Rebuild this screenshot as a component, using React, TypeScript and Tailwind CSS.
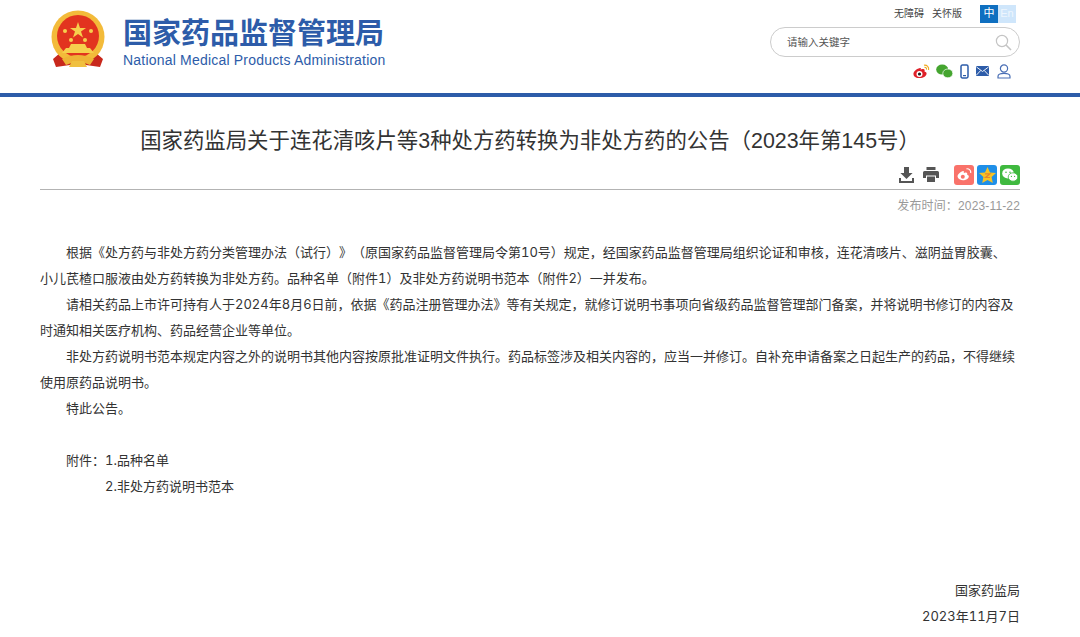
const cjk = "font-['Liberation_Sans','Noto_Sans_CJK_SC',sans-serif]";

function Emblem() {
  return (
    <svg width="56" height="60" viewBox="0 0 56 60">
      <path d="M10 44 L3 50 L6 58 L20 56 L36 56 L50 58 L53 50 L46 44 Z" fill="#c8281c" />
      <circle cx="28" cy="28" r="26.5" fill="#f3bb3a" />
      <circle cx="28" cy="27" r="21" fill="#e2341f" />
      <path d="M28 13 l2 6 h6 l-5 3.6 2 6 -5 -3.7 -5 3.7 2 -6 -5 -3.6 h6z" fill="#f6d04d" />
      <circle cx="15" cy="22" r="2" fill="#f6d04d" />
      <circle cx="41" cy="22" r="2" fill="#f6d04d" />
      <circle cx="21" cy="31" r="2" fill="#f6d04d" />
      <circle cx="35" cy="31" r="2" fill="#f6d04d" />
      <path d="M12 44 L16 39 H19 L21 35 H35 L37 39 H40 L44 44 Z" fill="#f6d04d" />
      <path d="M12 50 Q28 42 44 50 L40 56 Q28 50 16 56 Z" fill="#eeb336" />
      <path d="M22 52 h12 l3 6 h-18z" fill="#f0c040" />
    </svg>
  );
}

function Header() {
  return (
    <header className="flex justify-between h-[93px]">
      <div className="flex pl-[50px] pt-[9px]">
        <Emblem />
        <div className="ml-[17px]">
          <div className="mt-[5px] text-[29px] leading-[40px] font-bold text-[#2d5ca9]">国家药品监督管理局</div>
          <div className="text-[14px] leading-[14px] -mt-[1px] tracking-[0.2px] text-[#2d5ca9] font-['Liberation_Sans',sans-serif]">National Medical Products Administration</div>
        </div>
      </div>
      <div className="w-[250px] mr-[60px] flex flex-col items-end">
        <div className="flex items-center h-[21px] mt-[3px] pr-[4px] text-[10px] text-[#444]">
          <span>无障碍</span>
          <span className="ml-[8px]">关怀版</span>
          <span className="ml-[18px] w-[18px] h-[18px] bg-[#0f6fc0] text-white text-[11px] flex items-center justify-center">中</span>
          <span className="w-[18px] h-[18px] bg-[#cfe6fb] text-[#eef6fe] text-[11px] flex items-center justify-center">En</span>
        </div>
        <div className="mt-[3px] w-[250px] h-[30px] rounded-[15px] border border-[#ccc] flex items-center justify-between pl-[16px] pr-[7px] pt-[1px] text-[10.5px] text-[#555]">
          <span>请输入关键字</span>
          <svg width="17" height="17" viewBox="0 0 17 17" fill="none" stroke="#c4c4c4" strokeWidth="1.2">
            <circle cx="7" cy="7" r="5.6" />
            <path d="M11 11 L16 16" strokeWidth="1.6" />
          </svg>
        </div>
        <div className="flex items-center mt-[5px] pr-[9px] h-[18px]">
          <svg width="17" height="15" viewBox="0 0 17 15">
            <path d="M7 4 C3 5 0 8 .5 10.5 C1 13.5 5 14.5 8 14 C12 13.5 14 11 13.5 9 C13 8 12 7.7 11.5 7.5 C12 6 11.5 4.5 9.5 5 L7.5 5.6 C8 4 8 3.7 7 4Z" fill="#df2029" />
            <circle cx="6.5" cy="10" r="3" fill="#fff" />
            <circle cx="6.5" cy="10" r="1.6" fill="#222" />
            <path d="M11 1.2 C14 .8 16.2 3 15.6 6 M11.5 3.4 C13 3.2 13.8 4.2 13.5 5.6" fill="none" stroke="#f0a81e" strokeWidth="1.1" />
          </svg>
          <svg className="ml-[6px]" width="17" height="15" viewBox="0 0 17 15">
            <ellipse cx="6.2" cy="5.6" rx="6" ry="5" fill="#44a52f" />
            <ellipse cx="11.8" cy="9.4" rx="5" ry="4.4" fill="#44a52f" stroke="#fff" strokeWidth=".7" />
          </svg>
          <svg className="ml-[7px]" width="9" height="15" viewBox="0 0 9 15" fill="none">
            <rect x="1" y="1" width="7" height="13" rx="1.4" stroke="#2d5ca9" strokeWidth="1.5" />
            <path d="M3 11.6h3" stroke="#2d5ca9" strokeWidth="1.2" />
          </svg>
          <svg className="ml-[7px]" width="13" height="10" viewBox="0 0 13 10">
            <rect width="13" height="10" rx="1" fill="#2d5ca9" />
            <path d="M.5 1 L6.5 5.5 L12.5 1 M.5 9 L4.8 4.4 M12.5 9 L8.2 4.4" fill="none" stroke="#fff" strokeWidth=".9" />
          </svg>
          <svg className="ml-[8px]" width="14" height="15" viewBox="0 0 14 15" fill="none" stroke="#4a6fb5" strokeWidth="1.2">
            <circle cx="7" cy="4.5" r="3.6" />
            <path d="M1 14 V12.4 C1 10.4 3 9.4 7 9.4 C11 9.4 13 10.4 13 12.4 V14 Z" />
          </svg>
        </div>
      </div>
    </header>
  );
}

function ShareBar() {
  return (
    <div className="flex justify-end items-center h-[33px] border-b border-[#b3b3b3] pb-[2px] pt-[5px]">
      <svg width="15" height="16" viewBox="0 0 15 16" fill="#555">
        <path d="M5 0h5v6h3.6L7.5 12 1.4 6H5z" />
        <path d="M0 11h2v3h11v-3h2v5H0z" />
      </svg>
      <svg className="ml-[9px]" width="16" height="15" viewBox="0 0 16 15" fill="#555">
        <path d="M3.5 0h9v3h-9z" />
        <path fillRule="evenodd" d="M1.5 4h13A1.5 1.5 0 0 1 16 5.5V11h-3V8.5H3V11H0V5.500A1.500 1.500 0 0 1 1.500 4z" />
        <path d="M4 9.500h8V15H4z" />
      </svg>
      <div className="ml-[15px] w-[20px] h-[20px] rounded-[3px] bg-[#f9726a] flex items-center justify-center">
        <svg width="15" height="13" viewBox="0 0 15 13">
          <path d="M6 3 C3 4 .3 6.500 .6 8.800 C1 11.500 4.500 12.600 7.200 12.200 C10.500 11.800 12.200 9.800 11.800 8.100 C11.500 7.200 10.600 6.900 10.200 6.700 C10.600 5.300 10 4.100 8.400 4.500 L6.800 5 C7 3.500 7 2.800 6 3Z" fill="#fff" />
          <circle cx="5.800" cy="8.800" r="2" fill="#f9726a" />
          <path d="M9.500 .8 C12.200 .5 14.200 2.400 13.600 5" fill="none" stroke="#fff" strokeWidth="1.200" />
        </svg>
      </div>
      <div className="ml-[3px] w-[20px] h-[20px] rounded-[3px] bg-[#1f8fe8] flex items-center justify-center">
        <svg width="17" height="16" viewBox="0 0 17 16">
          <path d="M8.500 0 L11 5.400 L17 6.100 L12.600 10 L13.800 16 L8.500 13 L3.200 16 L4.400 10 L0 6.100 L6 5.400Z" fill="#f7c325" />
          <path d="M6 6.800h5L6.500 10.500h4.500" fill="none" stroke="#e8872a" strokeWidth="1.200" />
        </svg>
      </div>
      <div className="ml-[3px] w-[20px] h-[20px] rounded-[3px] bg-[#3fb93f] flex items-center justify-center">
        <svg width="16" height="14" viewBox="0 0 16 14">
          <ellipse cx="6" cy="5.400" rx="5.800" ry="5" fill="#fff" />
          <ellipse cx="11" cy="9" rx="4.800" ry="4.200" fill="#fff" stroke="#3fb93f" strokeWidth=".8" />
          <circle cx="4" cy="4.200" r=".8" fill="#3fb93f" />
          <circle cx="8" cy="4.200" r=".8" fill="#3fb93f" />
          <circle cx="9.400" cy="8.400" r=".6" fill="#3fb93f" />
          <circle cx="12.600" cy="8.400" r=".6" fill="#3fb93f" />
        </svg>
      </div>
    </div>
  );
}

export default function App() {
  return (
    <div className={`w-[1080px] h-[637px] overflow-hidden bg-white ${cjk} [text-spacing-trim:space-all]`}>
      <Header />
      <div className="h-[4px] bg-[#2d5ca9]" />
      <main className="pl-[40px] pr-[60px]">
        <h1 className="mt-[28px] text-center text-[21.4px] leading-[32px] font-normal text-[#333]">
          国家药监局关于连花清咳片等3种处方药转换为非处方药的公告（2023年第145号）
        </h1>
        <ShareBar />
        <div className="mt-[8px] text-right text-[12px] leading-[16px] text-[#999] tracking-[0.15px]">发布时间：2023-11-22</div>
        <div className="mt-[25px] text-[13px] leading-[26px] text-[#333] tabular-nums font-['Inter','Noto_Sans_CJK_SC',sans-serif]">
          <p className="indent-[26px]">根据《处方药与非处方药分类管理办法（试行）》（原国家药品监督管理局令第10号）规定，经国家药品监督管理局组织论证和审核，连花清咳片、滋阴益胃胶囊、<br />小儿芪楂口服液由处方药转换为非处方药。品种名单（附件1）及非处方药说明书范本（附件2）一并发布。</p>
          <p className="indent-[26px]">请相关药品上市许可持有人于2024年8月6日前，依据《药品注册管理办法》等有关规定，就修订说明书事项向省级药品监督管理部门备案，并将说明书修订的内容及<br />时通知相关医疗机构、药品经营企业等单位。</p>
          <p className="indent-[26px]">非处方药说明书范本规定内容之外的说明书其他内容按原批准证明文件执行。药品标签涉及相关内容的，应当一并修订。自补充申请备案之日起生产的药品，不得继续<br />使用原药品说明书。</p>
          <p className="indent-[26px]">特此公告。</p>
          <p className="h-[26px]" />
          <p className="indent-[26px]">附件：1.品种名单</p>
          <p className="pl-[65px]">2.非处方药说明书范本</p>
          <div className="h-[78px]" />
          <p className="text-right">国家药监局</p>
          <p className="text-right">2023年11月7日</p>
        </div>
      </main>
    </div>
  );
}
